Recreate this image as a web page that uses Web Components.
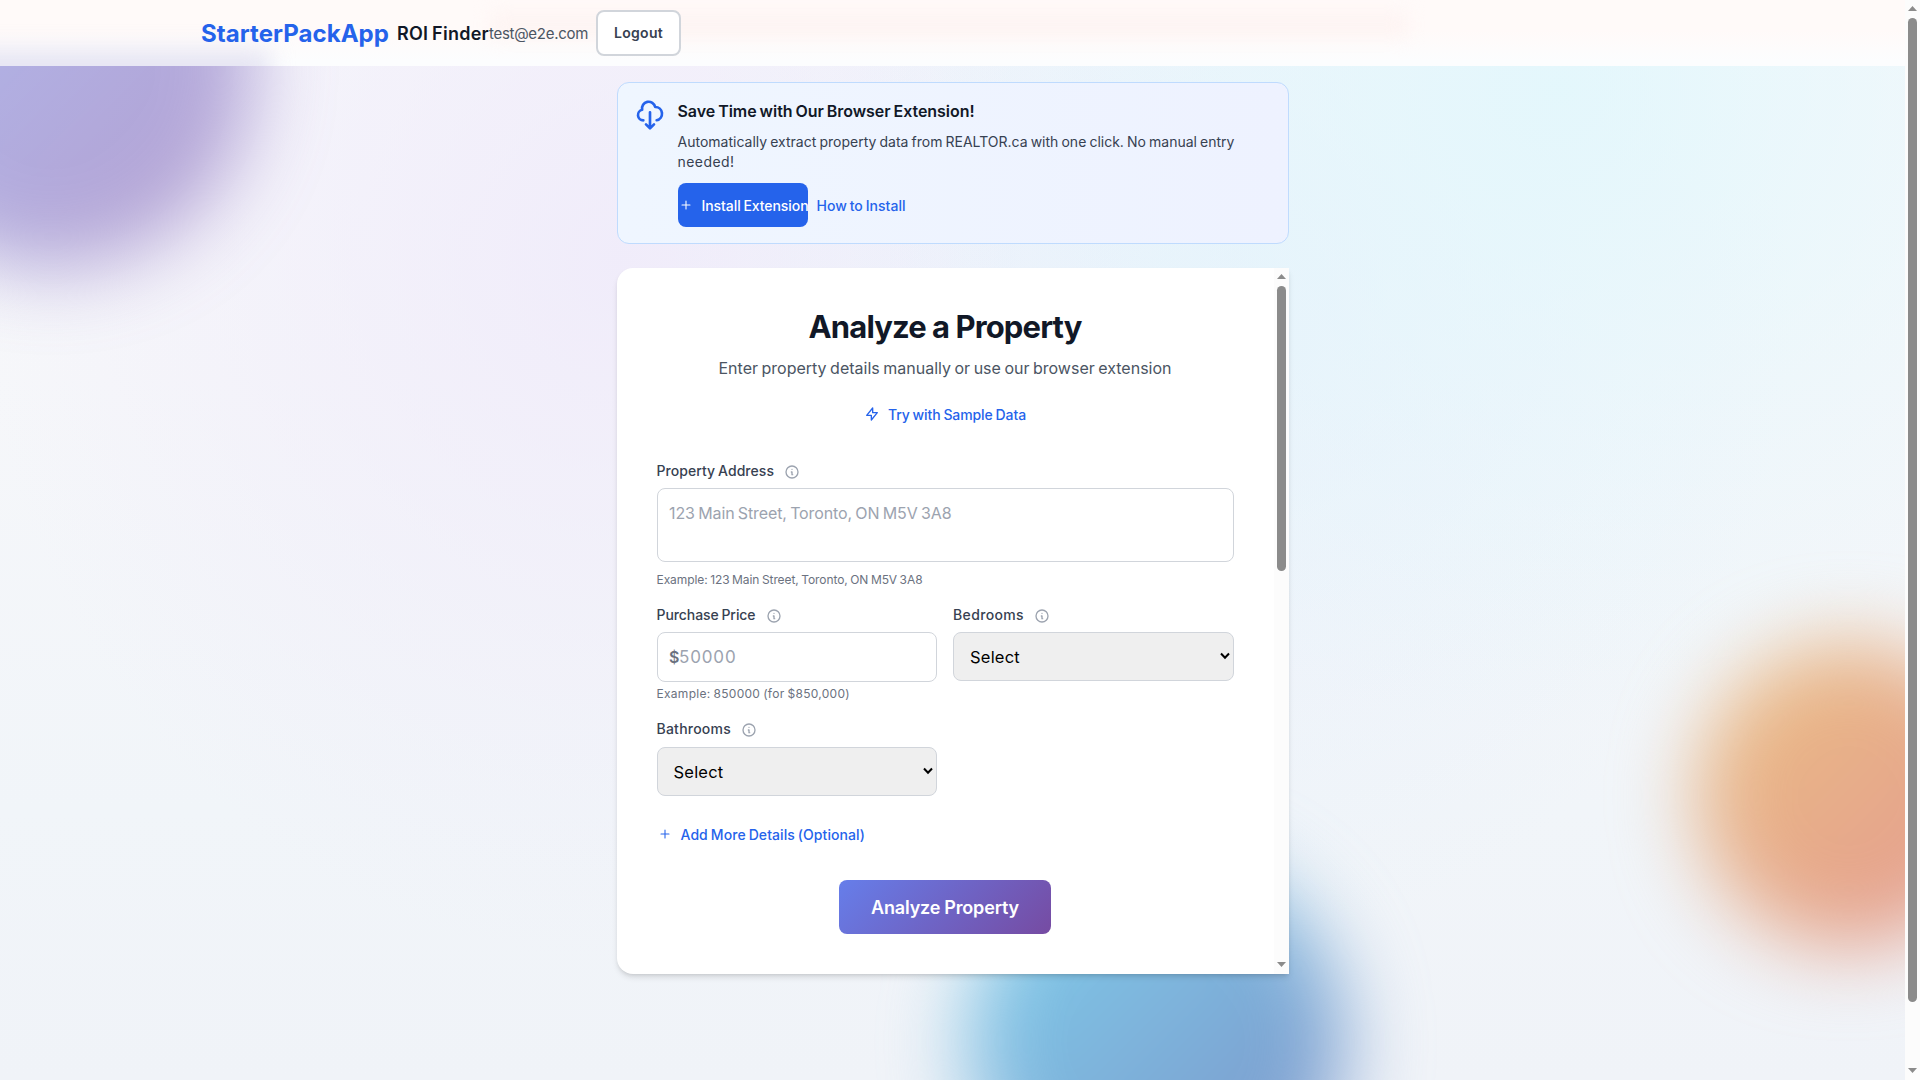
<!DOCTYPE html>
<html lang="en">
<head>
<meta charset="utf-8">
<title>ROI Finder</title>
<style>
html,body{margin:0;height:1080px;overflow:hidden}
body{font-family:Inter,"Liberation Sans",sans-serif;color:#111827;background:#f3f6fa}
</style>
</head>
<body>
<roi-page></roi-page>
<script>
const define = (name, html, setup) => customElements.define(name, class extends HTMLElement {
  connectedCallback() {
    if (this.shadowRoot) return;
    const t = document.createElement('template');
    t.innerHTML = typeof html === 'function' ? html(this) : html;
    this.attachShadow({mode: 'open'}).append(t.content.cloneNode(true));
    if (setup) setup(this);
  }
});

/* Text whose tracking is adjusted so that it takes the width given in "w". */
define('fit-text', '<style>:host{display:inline-block;white-space:nowrap;flex:none;word-spacing:var(--space,-.06em)}</style><slot></slot>', el => {
  const w = parseFloat(el.getAttribute('w'));
  const natural = el.getBoundingClientRect().width;
  el.style.letterSpacing = ((w - natural) / el.textContent.length).toFixed(4) + 'px';
  el.style.width = w + 'px';
});

define('ui-icon', el => {
  const paths = {
    cloud: '<path d="M7 16a4 4 0 01-.88-7.903A5 5 0 1115.9 6L16 6a5 5 0 011 9.9M9 19l3 3m0 0l3-3m-3 3V10"/>',
    plus: '<path d="M12 6v12m6-6H6"/>',
    bolt: '<path d="M13 10V3L4 14h7v7l9-11h-7z"/>',
    info: '<path d="M13 16h-1v-4h-1m1-4h.01M21 12a9 9 0 11-18 0 9 9 0 0118 0z"/>'
  };
  const s = el.getAttribute('size');
  return `<style>:host{display:block;flex:none;width:${s}px;height:${s}px}svg{display:block}</style>
  <svg width="${s}" height="${s}" viewBox="0 0 24 24" fill="none" stroke="currentColor" stroke-width="${el.getAttribute('stroke') || 2}" stroke-linecap="round" stroke-linejoin="round">${paths[el.getAttribute('name')]}</svg>`;
});

define('scroll-bar', `<style>
:host{display:flex;flex-direction:column;align-items:center;width:15px;flex:none;background:#fcfcfc;box-sizing:border-box;padding:6px 0 7px}
svg{display:block;flex:none}
.thumb{width:9px;height:var(--thumb);margin-top:7px;border-radius:5px;background:#8b8b8b;flex:none}
.gap{flex:1}
</style>
<svg width="9" height="5"><path d="M4.500 0 9 5H0z" fill="#8b8b8b"/></svg>
<div class="thumb"></div><div class="gap"></div>
<svg width="9" height="5"><path d="M0 0h9L4.500 5z" fill="#8b8b8b"/></svg>`);

define('page-backdrop', `<style>
:host{display:block;position:absolute;inset:0;overflow:hidden;
background:
radial-gradient(ellipse 700px 640px at 1560px 90px,rgba(226,247,252,.9),rgba(226,247,252,0)),
radial-gradient(ellipse 560px 640px at 1230px 300px,rgba(228,239,252,.7),rgba(228,239,252,0)),
radial-gradient(ellipse 640px 700px at 620px 260px,rgba(239,234,250,.85),rgba(239,234,250,0)),
linear-gradient(#f8f9fb,#f6f7fa 35%,#f1f5f9 75%,#f0f3f8)}
.b{position:absolute;border-radius:50%;filter:blur(40px)}
.p{left:-150px;top:-134px;width:404px;height:404px;background:linear-gradient(135deg,#667eea,#764ba2);opacity:.5}
.o{left:1696px;top:643px;width:306px;height:306px;background:linear-gradient(135deg,#ebc184,#e39790)}
.c{left:968px;top:854px;width:376px;height:376px;background:linear-gradient(135deg,#7fd3ee,#7c8fc6)}
</style><div class="b p"></div><div class="b o"></div><div class="b c"></div>`);

define('app-header', `<style>
:host{display:flex;align-items:center;height:66px;box-sizing:border-box;padding-left:201px;position:relative;overflow:hidden;
background:linear-gradient(#fffaf9,#fffaf9 45%,#fcfdfe 92%)}
.tint{position:absolute;left:-60px;top:50px;width:330px;height:50px;background:#dcdaee;filter:blur(12px);opacity:.7}
.glow{position:absolute;left:490px;top:12px;width:918px;height:25px;background:#fdf0ee;filter:blur(10px);opacity:.6}
fit-text,.out{position:relative}
.logo{font-size:24px;font-weight:700;color:#2563eb}
.name{font-size:18px;font-weight:600;margin-left:8px}
.mail{font-size:15px;color:#4b5563}
.out{display:flex;align-items:center;justify-content:center;box-sizing:border-box;width:85px;height:46px;margin-left:8px;border:2px solid #d1d5db;border-radius:8px;background:#fff;font-size:14px;font-weight:600;color:#374151}
.out fit-text{margin-bottom:1px}
</style><div class="tint"></div><div class="glow"></div>
<fit-text class="logo" w="188">StarterPackApp</fit-text><fit-text class="name" w="92">ROI Finder</fit-text><fit-text class="mail" w="99">test@e2e.com</fit-text>
<div class="out"><fit-text w="49">Logout</fit-text></div>`);

define('extension-banner', `<style>
:host{display:flex;gap:12px;box-sizing:border-box;height:162px;padding:16px;border:1px solid #bfdbfe;border-radius:12px;background:linear-gradient(90deg,#eff6ff,#eef2ff)}
ui-icon{color:#2563eb}
.t{display:flex;font-size:16px;line-height:24px;font-weight:600}
.p{font-size:14px;line-height:20px;color:#374151;margin-top:9px;display:flex;flex-direction:column;align-items:flex-start}
.row{display:flex;align-items:center;gap:9px;margin-top:11px;font-size:14px;font-weight:500;color:#2563eb}
.btn{display:flex;align-items:center;width:130px;height:44px;border-radius:8px;background:#2563eb;color:#fff;gap:8px}
.btn ui-icon{color:#fff}
</style>
<ui-icon name="cloud" size="32"></ui-icon>
<div><div class="t"><fit-text w="297">Save Time with Our Browser Extension!</fit-text></div>
<div class="p"><fit-text w="557">Automatically extract property data from REALTOR.ca with one click. No manual entry</fit-text><fit-text w="57">needed!</fit-text></div>
<div class="row"><div class="btn"><ui-icon name="plus" size="16" stroke="1.600"></ui-icon><fit-text w="107">Install Extension</fit-text></div><fit-text w="89">How to Install</fit-text></div></div>`);

define('field-label', `<style>
:host{display:flex;align-items:center;gap:10px;height:20px;font-size:14px;font-weight:500;color:#374151}
::slotted(*){margin-bottom:2px}
ui-icon{color:#9ca3af;margin-top:2px}
</style><slot></slot><ui-icon name="info" size="16"></ui-icon>`);

define('text-box', `<style>
:host{display:flex;box-sizing:border-box;border:1px solid #d1d5db;border-radius:8px;background:#fff;padding:12px 11.500px;font-size:16px;line-height:24px;color:#9ca3af}
::slotted(.prefix){color:#6b7280;font-weight:600}
::slotted(.amount){font-size:17px}
</style><slot></slot>`);

define('select-box', `<style>
:host{display:flex;align-items:center;justify-content:space-between;box-sizing:border-box;height:49px;border:1px solid #d1d5db;border-radius:8px;background:#efefef;padding:0 3px 0 16px;font-size:16.500px;color:#000}
svg{display:block;margin-bottom:1px}
</style><slot></slot><svg width="10" height="8" viewBox="0 0 10 8"><path d="M1 1.500 5 5.700 9 1.500" fill="none" stroke="#000" stroke-width="2"/></svg>`);

define('property-card', `<style>
:host{display:flex;height:706px;border-radius:16px 0 0 16px;background:#fff;box-shadow:0 4px 6px -1px rgba(0,0,0,.12),0 2px 4px -2px rgba(0,0,0,.12);--thumb:285px}
.in{flex:1;padding:40px;display:flex;flex-direction:column}
h1,p{margin:0;display:flex;justify-content:center}
h1{font-size:31px;line-height:37px;font-weight:700;--space:-.01em}
.sub{font-size:16px;line-height:24px;color:#4b5563;margin-top:11px}
.link{display:flex;align-items:center;gap:8px;height:44px;font-size:14px;font-weight:500;color:#2563eb}
.try{align-self:center;margin:12px 0 25px}
.help{display:flex;height:17px;line-height:17px;font-size:12px;color:#6b7280}
.row{display:flex;gap:16px;margin-top:17px}
.row>div{width:280.500px}
.go{align-self:center;display:flex;align-items:center;justify-content:center;width:212px;height:54px;border-radius:8px;background:linear-gradient(135deg,#667eea,#764ba2);color:#fff;font-size:18px;font-weight:600;margin-top:24px;--space:-.02em}
</style>
<div class="in">
<h1><fit-text w="273">Analyze a Property</fit-text></h1>
<p class="sub"><fit-text w="453">Enter property details manually or use our browser extension</fit-text></p>
<div class="link try"><ui-icon name="bolt" size="16"></ui-icon><fit-text w="138">Try with Sample Data</fit-text></div>
<field-label><fit-text w="117.500">Property Address</fit-text></field-label>
<text-box style="height:74px;margin:7px 0 9px"><fit-text w="282.500">123 Main Street, Toronto, ON M5V 3A8</fit-text></text-box>
<div class="help"><fit-text w="266">Example: 123 Main Street, Toronto, ON M5V 3A8</fit-text></div>
<div class="row">
<div><field-label><fit-text w="99">Purchase Price</fit-text></field-label>
<text-box style="height:50px;margin:7px 0 3px"><fit-text class="prefix" w="10">$</fit-text><fit-text class="amount" w="57.500">50000</fit-text></text-box>
<div class="help"><fit-text w="193.500">Example: 850000 (for $850,000)</fit-text></div></div>
<div><field-label><fit-text w="71">Bedrooms</fit-text></field-label><select-box style="margin-top:7px"><fit-text w="50">Select</fit-text></select-box></div>
</div>
<div class="row"><div><field-label><fit-text w="74.500">Bathrooms</fit-text></field-label><select-box style="margin-top:8px"><fit-text w="50">Select</fit-text></select-box></div></div>
<div class="link" style="margin-top:16px"><ui-icon name="plus" size="16" stroke="1.600"></ui-icon><fit-text w="184.500">Add More Details (Optional)</fit-text></div>
<div class="go"><fit-text w="148">Analyze Property</fit-text></div>
</div><scroll-bar></scroll-bar>`);

define('roi-page', `<style>
:host{display:flex;height:1080px;width:1920px;position:relative;--thumb:984px}
.view{flex:1;position:relative;overflow:hidden}
main{position:relative;width:672px;margin:16px auto 0;display:flex;flex-direction:column;gap:24px}
</style>
<div class="view"><page-backdrop></page-backdrop><app-header></app-header>
<main><extension-banner></extension-banner><property-card></property-card></main></div>
<scroll-bar></scroll-bar>`);
</script>
</body>
</html>
